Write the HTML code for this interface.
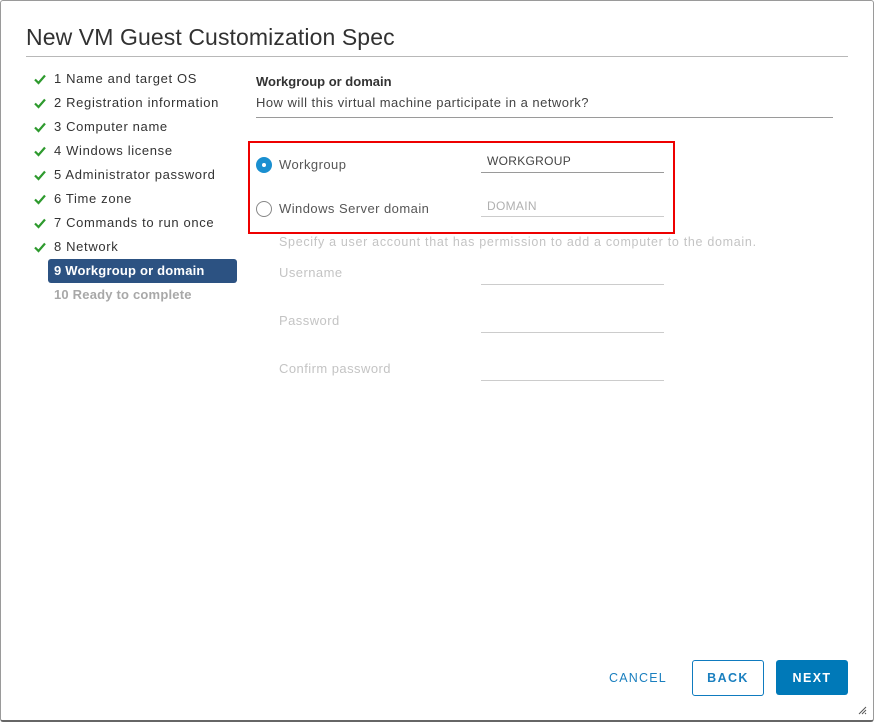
<!DOCTYPE html>
<html><head><style>
html,body{margin:0;padding:0;width:874px;height:722px;overflow:hidden;background:#fff;font-family:"Liberation Sans",sans-serif;}
.dlg{position:absolute;left:0;top:0;width:872px;height:719px;border:1px solid #9a9a9a;border-bottom:2px solid #666;border-radius:3px;background:#fff;}
.abs{position:absolute;white-space:nowrap;}
h1{position:absolute;left:26px;top:24px;margin:0;font-weight:normal;font-size:23px;color:#313131;letter-spacing:0.1px;}
.hr{position:absolute;left:26px;top:56px;width:822px;height:1px;background:#b8b8b8;}
.nav{font-size:13px;color:#333;letter-spacing:0.65px;}
.chk{position:absolute;left:34px;width:12px;height:12px;}
.lbl{font-size:13px;color:#565656;letter-spacing:0.45px;}
.dis{color:#c4c4c4;}
.inp{position:absolute;left:481px;width:183px;height:1px;background:#9a9a9a;}
.dinp{background:#ccc;}
</style></head><body>
<div class="dlg"></div>
<h1>New VM Guest Customization Spec</h1>
<div class="hr"></div>

<svg width="0" height="0" style="position:absolute"><defs><symbol id="c" viewBox="0 0 12 12"><path d="M1 6.5 L4.5 10 L11 2.5" stroke="#2e9a2e" stroke-width="2.2" fill="none"/></symbol></defs></svg>
<svg class="chk" style="top:73px"><use href="#c"/></svg><div class="abs nav" style="left:54px;top:71px">1 Name and target OS</div>
<svg class="chk" style="top:97px"><use href="#c"/></svg><div class="abs nav" style="left:54px;top:95px">2 Registration information</div>
<svg class="chk" style="top:121px"><use href="#c"/></svg><div class="abs nav" style="left:54px;top:119px">3 Computer name</div>
<svg class="chk" style="top:145px"><use href="#c"/></svg><div class="abs nav" style="left:54px;top:143px">4 Windows license</div>
<svg class="chk" style="top:169px"><use href="#c"/></svg><div class="abs nav" style="left:54px;top:167px">5 Administrator password</div>
<svg class="chk" style="top:193px"><use href="#c"/></svg><div class="abs nav" style="left:54px;top:191px">6 Time zone</div>
<svg class="chk" style="top:217px"><use href="#c"/></svg><div class="abs nav" style="left:54px;top:215px">7 Commands to run once</div>
<svg class="chk" style="top:241px"><use href="#c"/></svg><div class="abs nav" style="left:54px;top:239px">8 Network</div>
<div class="abs" style="left:48px;top:259px;width:189px;height:24px;background:#2c5282;border-radius:3px;"></div>
<div class="abs nav" style="left:54px;top:263px;color:#fff;font-weight:bold;letter-spacing:0.2px">9 Workgroup or domain</div>
<div class="abs nav" style="left:54px;top:287px;color:#a8a8a8;font-weight:bold;letter-spacing:0.2px">10 Ready to complete</div>

<div class="abs" style="left:256px;top:74px;font-size:13px;font-weight:bold;color:#333">Workgroup or domain</div>
<div class="abs" style="left:256px;top:95px;font-size:13px;color:#444;letter-spacing:0.47px">How will this virtual machine participate in a network?</div>
<div class="abs" style="left:256px;top:117px;width:577px;height:1px;background:#9a9a9a"></div>

<div class="abs" style="left:248px;top:141px;width:423px;height:89px;border:2px solid #e00;"></div>
<div class="abs" style="left:256px;top:157px;width:16px;height:16px;border-radius:50%;background:#1a8fd0;"></div>
<div class="abs" style="left:262px;top:163px;width:4px;height:4px;border-radius:50%;background:#fff;"></div>
<div class="abs lbl" style="left:279px;top:157px">Workgroup</div>
<div class="abs lbl" style="left:487px;top:154px;font-size:12px;color:#444;letter-spacing:0.3px">WORKGROUP</div>
<div class="inp" style="top:172px"></div>
<div class="abs" style="left:256px;top:201px;width:14px;height:14px;border-radius:50%;border:1px solid #888;"></div>
<div class="abs lbl" style="left:279px;top:201px">Windows Server domain</div>
<div class="abs lbl dis" style="left:487px;top:199px;font-size:12px;color:#b0b0b0;letter-spacing:0.3px">DOMAIN</div>
<div class="inp" style="top:216px;background:#ccc"></div>

<div class="abs lbl dis" style="left:279px;top:235px;font-size:12.5px;letter-spacing:0.7px">Specify a user account that has permission to add a computer to the domain.</div>
<div class="abs lbl dis" style="left:279px;top:265px">Username</div>
<div class="inp dinp" style="top:284px"></div>
<div class="abs lbl dis" style="left:279px;top:313px">Password</div>
<div class="inp dinp" style="top:332px"></div>
<div class="abs lbl dis" style="left:279px;top:361px">Confirm password</div>
<div class="inp dinp" style="top:380px"></div>

<div class="abs" style="left:609px;top:671px;font-size:12.5px;letter-spacing:1.2px;color:#1a7fbf">CANCEL</div>
<div class="abs" style="left:692px;top:660px;width:72px;height:36px;border:1px solid #0f7bbf;border-radius:3px;box-sizing:border-box;"></div>
<div class="abs" style="left:692px;top:671px;width:72px;text-align:center;font-size:12.5px;font-weight:bold;letter-spacing:1.4px;color:#1a7fbf">BACK</div>
<div class="abs" style="left:776px;top:660px;width:72px;height:35px;background:#0079b8;border-radius:3px;"></div>
<div class="abs" style="left:776px;top:671px;width:72px;text-align:center;font-size:12.5px;font-weight:bold;letter-spacing:1.4px;color:#fff">NEXT</div>
<svg class="abs" style="left:858px;top:706px" width="9" height="9"><path d="M8 1L1 8M8 4L4 8M8 7L7 8" stroke="#555" stroke-width="1"/></svg>
</body></html>
